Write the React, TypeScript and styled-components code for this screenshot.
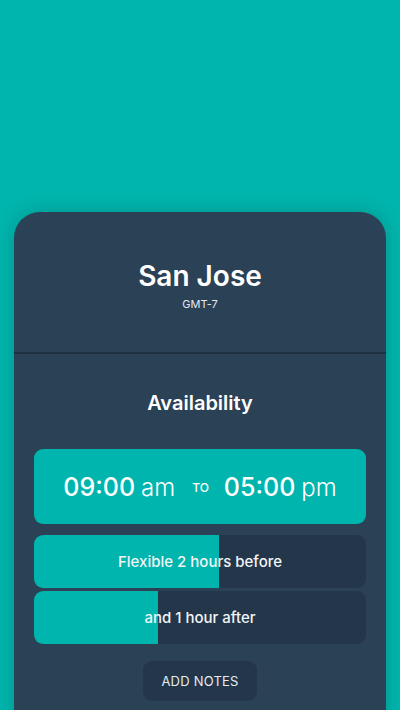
import styled, { createGlobalStyle } from "styled-components";

const GlobalStyle = createGlobalStyle`
  html, body {
    margin: 0;
    padding: 0;
    background: #00b5ad;
  }
  body {
    font-family: Inter, "Noto Sans", sans-serif;
    -webkit-font-smoothing: antialiased;
  }
`;

const flex = [
  { label: "Flexible 2 hours before", fill: 185 },
  { label: "and 1 hour after", fill: 124 },
];

const App = () => {
  return (
    <>
      <GlobalStyle />
      <Screen>
        <Card>
          <Header>
            <City>San Jose</City>
            <Zone>GMT-7</Zone>
          </Header>
          <Body>
            <SectionTitle>Availability</SectionTitle>
            <TimeBox>
              <Time>
                09:00<Meridiem>am</Meridiem>
              </Time>
              <To>TO</To>
              <Time>
                05:00<Meridiem>pm</Meridiem>
              </Time>
            </TimeBox>
            <FlexList>
              {flex.map((f) => (
                <FlexBar key={f.label}>
                  <FlexFill style={{ width: f.fill }} />
                  <FlexLabel>{f.label}</FlexLabel>
                </FlexBar>
              ))}
            </FlexList>
            <NotesButton>ADD NOTES</NotesButton>
          </Body>
        </Card>
      </Screen>
    </>
  );
};

const Screen = styled.div`
  width: 400px;
  height: 710px;
  overflow: hidden;
  background: #00b5ad;
  padding: 212px 14px 0;
  box-sizing: border-box;
`;

const Card = styled.div`
  background: #2b4156;
  border-radius: 26px 26px 0 0;
  box-shadow: 0 0 18px rgba(0, 60, 58, 0.28);
  height: 520px;
  display: flex;
  flex-direction: column;
`;

const Header = styled.div`
  display: flex;
  flex-direction: column;
  align-items: center;
  padding-top: 47px;
  height: 142px;
  box-sizing: border-box;
  border-bottom: 2px solid #1e2f3f;
`;

const City = styled.div`
  color: #ffffff;
  font-size: 28px;
  font-weight: 600;
  line-height: 34px;
`;

const Zone = styled.div`
  color: #e3e8ee;
  font-size: 11px;
  line-height: 14px;
  margin-top: 4px;
`;

const Body = styled.div`
  display: flex;
  flex-direction: column;
  align-items: center;
  padding: 36px 20px 0;
`;

const SectionTitle = styled.div`
  color: #ffffff;
  font-size: 20px;
  font-weight: 600;
  line-height: 26px;
`;

const TimeBox = styled.div`
  margin-top: 33px;
  align-self: stretch;
  height: 75px;
  background: #00b5ad;
  border-radius: 9px;
  display: flex;
  align-items: center;
  justify-content: center;
`;

const Time = styled.span`
  color: #ffffff;
  font-size: 25px;
  font-weight: 500;
  display: flex;
  align-items: baseline;
`;

const Meridiem = styled.span`
  font-size: 24px;
  font-weight: 300;
  margin-left: 6px;
`;

const To = styled.span`
  color: #ffffff;
  font-size: 12px;
  font-weight: 500;
  margin: 2px 15px 0 17px;
`;

const FlexList = styled.div`
  align-self: stretch;
  display: flex;
  flex-direction: column;
  gap: 3px;
  margin-top: 11px;
`;

const FlexBar = styled.div`
  position: relative;
  height: 53px;
  border-radius: 9px;
  background: #24374a;
  overflow: hidden;
  display: flex;
  align-items: center;
  justify-content: center;
`;

const FlexFill = styled.div`
  position: absolute;
  left: 0;
  top: 0;
  bottom: 0;
  background: #00b5ad;
`;

const FlexLabel = styled.span`
  position: relative;
  color: #f2f5f7;
  font-size: 15px;
  font-weight: 500;
`;

const NotesButton = styled.button`
  margin-top: 17px;
  width: 114px;
  height: 40px;
  border: none;
  border-radius: 9px;
  background: #24374a;
  color: #e6ebf0;
  font-family: Inter, "Noto Sans", sans-serif;
  font-size: 13px;
  font-weight: 400;
  letter-spacing: 0.2px;
`;

export default App;
